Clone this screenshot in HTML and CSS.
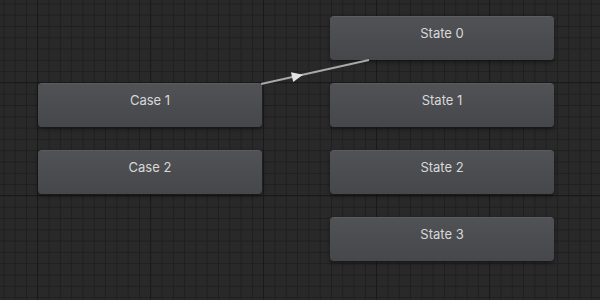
FILE: index.html
```
<!DOCTYPE html>
<html>
<head>
    <title>Animator</title>
    <link rel="stylesheet" href="styles.css">
</head>
<body>
    <div class="graph">
        <!-- transition Case 1 -> State 0 -->
        <svg class="edges" width="600" height="300" viewBox="0 0 600 300">
            <line x1="261" y1="84" x2="369" y2="60" class="edge-line" />
            <polygon points="303,74.7 293.2,82 291,72.2" class="edge-arrow" />
        </svg>

        <div class="column left-col">
            <div class="node">Case 1</div>
            <div class="node">Case 2</div>
        </div>

        <div class="column right-col">
            <div class="node">State 0</div>
            <div class="node">State 1</div>
            <div class="node">State 2</div>
            <div class="node">State 3</div>
        </div>
    </div>
</body>
</html>
```

FILE: styles.css
```
html, body {
    margin: 0;
    padding: 0;
}
body {
    font-family: Inter, "Liberation Sans", sans-serif;
    background-color: #282828;
    overflow: hidden;
}
.graph {
    position: relative;
    display: flex;
    gap: 68px;
    width: 600px;
    height: 300px;
    padding-left: 38px;
    box-sizing: border-box;
    background-color: #292929;
    background-image:
        linear-gradient(to right, #1a1a1a 1px, transparent 1px),
        linear-gradient(to bottom, #1a1a1a 1px, transparent 1px),
        linear-gradient(to right, #1f1f1f 1px, transparent 1px),
        linear-gradient(to bottom, #1f1f1f 1px, transparent 1px);
    background-size: 113px 113px, 113px 113px, 11.3px 11.3px, 11.3px 11.3px;
    background-position: 37px 82px, 37px 82px, 3.4px 3.4px, 3.4px 3.4px;
}
.edges {
    position: absolute;
    top: 0;
    left: 0;
    pointer-events: none;
}
.edge-line {
    stroke: #a9a9a9;
    stroke-width: 2;
}
.edge-arrow {
    fill: #e2e2e2;
}
.column {
    display: flex;
    flex-direction: column;
    gap: 23.5px;
}
.left-col {
    padding-top: 83px;
}
.right-col {
    padding-top: 16px;
}
.node {
    width: 224px;
    height: 43.5px;
    box-sizing: border-box;
    padding-top: 8px;
    border-radius: 4px;
    border-top: 1px solid #5a5c60;
    background: linear-gradient(to bottom, #505256, #45474b);
    box-shadow: 0 2px 4px rgba(0,0,0,0.45);
    color: #d8d8d8;
    font-size: 13px;
    line-height: 16px;
    text-align: center;
}
```
